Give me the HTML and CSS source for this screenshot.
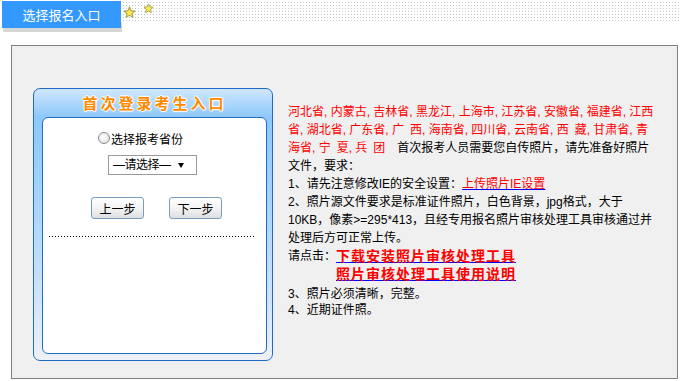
FILE: index.html
```html
<!DOCTYPE html>
<html lang="zh-CN">
<head>
<meta charset="utf-8">
<title>选择报名入口</title>
<link rel="stylesheet" href="styles.css">
</head>
<body>
<div class="top">
  <div class="tab">选择报名入口</div>
  <div class="dots">
    <svg class="star star-big" viewBox="0 0 24 24" width="13" height="13"><polygon points="12,2 14.9,8.6 22,9.3 16.6,14 18.2,21 12,17.3 5.8,21 7.4,14 2,9.3 9.1,8.6" fill="#f9ea55" stroke="#aaa14a" stroke-width="2" stroke-linejoin="round"/></svg>
    <svg class="star star-small" viewBox="0 0 24 24" width="11" height="11"><polygon points="12,2 14.9,8.6 22,9.3 16.6,14 18.2,21 12,17.3 5.8,21 7.4,14 2,9.3 9.1,8.6" fill="#f9ea55" stroke="#aaa14a" stroke-width="2" stroke-linejoin="round"/></svg>
  </div>
</div>
<div class="main">
  <div class="panel">
    <div class="panel-title">首次登录考生入口</div>
    <div class="panel-body">
      <div class="radio-row"><span class="radio"></span>选择报考省份</div>
      <div class="select"><span class="select-text">—请选择—</span><span class="arrow"></span></div>
      <div class="btns"><button class="btn">上一步</button><button class="btn">下一步</button></div>
      <div class="dotline"></div>
    </div>
  </div>
  <div class="info">
    <p class="para"><span class="red">河北省, 内蒙古, 吉林省, 黑龙江, 上海市, 江苏省, 安徽省, 福建省, 江西<br>省, 湖北省, 广东省, 广&ensp;西, 海南省, 四川省, 云南省, 西&ensp;藏, 甘肃省, 青<br>海省, 宁&ensp;夏, 兵&ensp;团</span>&emsp;首次报考人员需要您自传照片，请先准备好照片<br>文件，要求：<br>1、请先注意修改IE的安全设置：<a class="link" href="#">上传照片IE设置</a><br>2、照片源文件要求是标准证件照片，白色背景，jpg格式，大于<br>10KB，像素&gt;=295*413，且经专用报名照片审核处理工具审核通过并<br>处理后方可正常上传。</p>
    <div class="click-row">
      <span class="click-label">请点击：</span>
      <div class="big-links">
        <a class="big-link" href="#">下载安装照片审核处理工具</a>
        <a class="big-link" href="#">照片审核处理工具使用说明</a>
      </div>
    </div>
    <p class="para tail">3、照片必须清晰，完整。<br>4、近期证件照。</p>
  </div>
</div>
</body>
</html>
```
FILE: styles.css
```css
body {
  margin: 0;
  background: #fff;
  font-family: "Liberation Sans", "Noto Sans CJK SC", sans-serif;
  font-size: 12px;
  color: #000;
}

.top {
  display: flex;
  height: 28px;
}

.tab {
  margin: 1px 0 0 2px;
  width: 119px;
  height: 27px;
  background: #3399ff;
  color: #fff;
  font-family: "Noto Sans CJK SC", sans-serif;
  font-size: 13px;
  line-height: 27px;
  text-align: center;
  box-shadow: 1px 4px 0 #d6d6d6;
}

.dots {
  flex: 1;
  height: 22px;
  display: flex;
  align-items: flex-start;
  background:
    linear-gradient(90deg, #fff 2px, transparent 2px) 0 0 / 3px 3px,
    linear-gradient(#fff 2px, transparent 2px) 0 0 / 3px 3px,
    #c4c4c4;
}

.star { display: block; }
.star-big { margin: 6px 0 0 2px; }
.star-small { margin: 3px 0 0 7px; }

.main {
  margin: 17px 0 0 11px;
  width: 667px;
  height: 334px;
  box-sizing: border-box;
  border: 1px solid #808080;
  background: #f0f0f0;
  display: flex;
  align-items: flex-start;
  gap: 15px;
  padding: 42px 0 0 21px;
}

.panel {
  width: 240px;
  height: 273px;
  box-sizing: border-box;
  border: 1px solid #1f6cc4;
  border-radius: 7px;
  padding: 0 5px 6px 8px;
  display: flex;
  flex-direction: column;
  background: linear-gradient(to bottom, #cfe7ff 0, #8ec8fa 28px, #9fd0fa 90px, #c8e0f8 190px, #eef1f5 100%);
}

.panel-title {
  height: 28px;
  line-height: 28px;
  text-align: center;
  font-family: "Noto Sans CJK SC", sans-serif;
  font-weight: bold;
  font-size: 15px;
  letter-spacing: 3px;
  color: #ff8a00;
  text-shadow: -1px 0 #fff, 1px 0 #fff, 0 -1px #fff, 0 1px #fff, 0 0 3px #fff;
}

.panel-body {
  flex: 1;
  background: #fff;
  border: 1px solid #1f6cc4;
  border-radius: 6px;
  padding-top: 11px;
}

.radio-row {
  display: flex;
  align-items: center;
  height: 18px;
  margin-left: 55px;
  font-family: "Noto Sans CJK SC", sans-serif;
  font-size: 12px;
}

.radio {
  width: 10px;
  height: 10px;
  border: 1px solid #8a8a8a;
  border-radius: 50%;
  background: radial-gradient(circle at 40% 40%, #fff, #dcdcdc);
  margin-right: 1px;
}

.select {
  margin: 8px 0 0 65px;
  width: 89px;
  height: 20px;
  box-sizing: border-box;
  border: 1px solid #9a9a9a;
  background: #fff;
  display: flex;
  align-items: center;
  padding-left: 4px;
  font-family: "Liberation Sans", "Noto Sans CJK SC", sans-serif;
}

.select-text { font-size: 12px; line-height: 18px; letter-spacing: -0.5px; }

.arrow {
  margin-left: 7px;
  width: 0;
  height: 0;
  border-left: 3px solid transparent;
  border-right: 3px solid transparent;
  border-top: 5px solid #000;
}

.btns {
  display: flex;
  gap: 25px;
  margin: 22px 0 0 48px;
}

.btn {
  width: 53px;
  height: 22px;
  padding: 0;
  box-sizing: border-box;
  border: 1px solid #7a9cc0;
  border-radius: 3px;
  background: linear-gradient(#ffffff, #f2f2f2 55%, #dddfe2);
  font-family: "Noto Sans CJK SC", sans-serif;
  font-size: 12px;
  color: #000;
}

.dotline {
  margin: 17px 0 0 6px;
  width: 205px;
  height: 1px;
  background: linear-gradient(90deg, #000 1px, transparent 1px) 0 0 / 3px 1px repeat-x;
}

.info {
  margin-top: 15px;
  width: 380px;
  line-height: 18px;
}

.para { margin: 0; }
.red { color: #f00; }

.link {
  color: #f00;
  text-decoration: underline;
  text-decoration-color: #00f;
}

.click-row {
  display: flex;
  align-items: flex-start;
}

.click-label { line-height: 18px; }

.big-links {
  display: flex;
  flex-direction: column;
}

.big-link {
  color: #f00;
  font-weight: bold;
  font-size: 14px;
  letter-spacing: 1px;
  line-height: 18px;
  text-decoration: underline;
  text-decoration-color: #00f;
}

.tail {
  margin-top: 3px;
  line-height: 16px;
}
```
